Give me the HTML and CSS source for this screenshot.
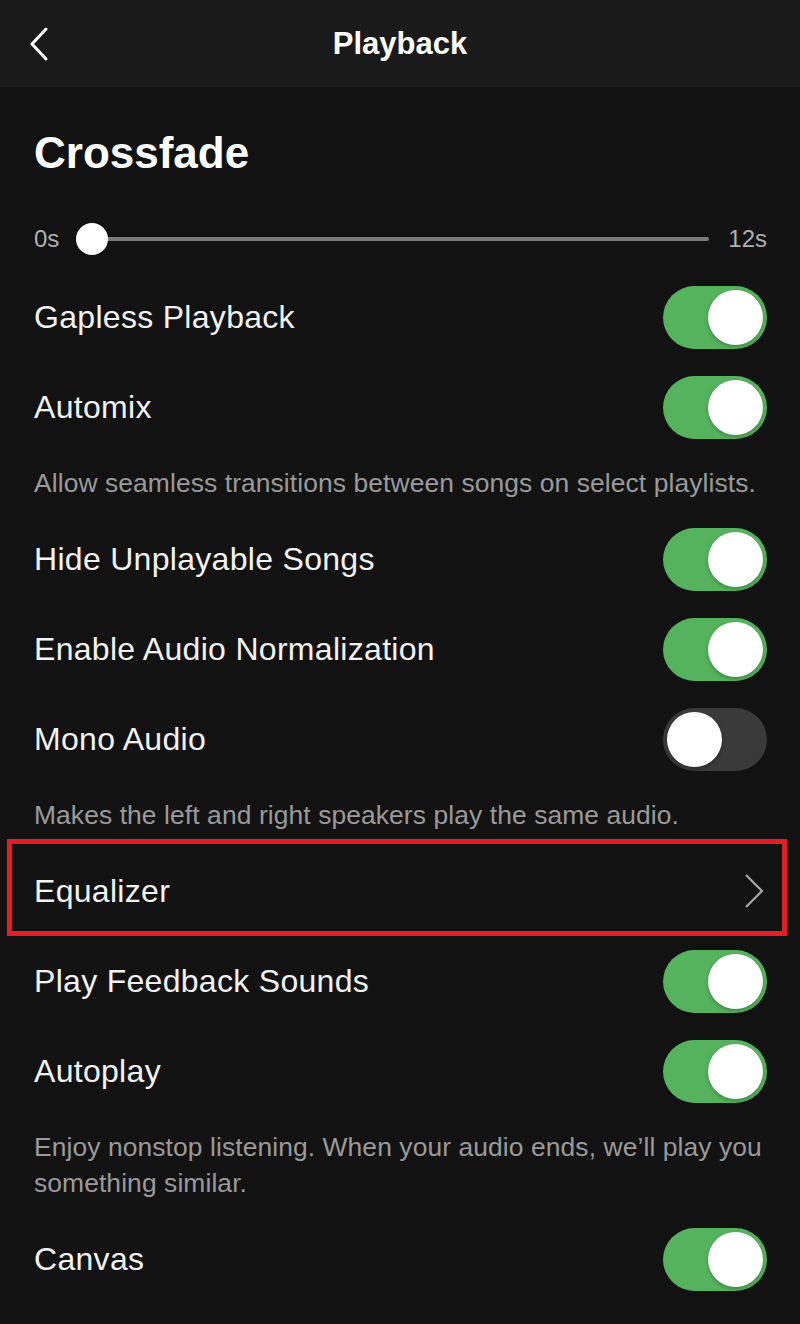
FILE: index.html
```html
<!DOCTYPE html>
<html lang="en">
<head>
  <meta charset="UTF-8">
  <title>Playback</title>
  <link rel="stylesheet" href="styles.css">
</head>
<body>
  <div class="topbar">
    <div class="back">
      <svg width="20" height="34" viewBox="0 0 20 34">
        <polyline points="17,2 3,17 17,32" fill="none" stroke="#fff" stroke-width="3" stroke-linecap="round" stroke-linejoin="round"/>
      </svg>
    </div>
    <h2>Playback</h2>
    <div></div>
  </div>

  <div class="settings">
    <h1>Crossfade</h1>

    <div class="slider">
      <span class="slider-label">0s</span>
      <div class="track"><div class="thumb"></div></div>
      <span class="slider-label">12s</span>
    </div>

    <div class="row">
      <span>Gapless Playback</span>
      <div class="switch on"><div class="knob"></div></div>
    </div>
    <div class="row">
      <span>Automix</span>
      <div class="switch on"><div class="knob"></div></div>
    </div>
    <p class="hint">Allow seamless transitions between songs on select playlists.</p>

    <div class="row">
      <span>Hide Unplayable Songs</span>
      <div class="switch on"><div class="knob"></div></div>
    </div>
    <div class="row">
      <span>Enable Audio Normalization</span>
      <div class="switch on"><div class="knob"></div></div>
    </div>
    <div class="row">
      <span>Mono Audio</span>
      <div class="switch"><div class="knob"></div></div>
    </div>
    <p class="hint">Makes the left and right speakers play the same audio.</p>

    <div class="row marked">
      <span>Equalizer</span>
      <svg class="chevron" width="20" height="34" viewBox="0 0 20 34">
        <polyline points="2,1 18,17 2,33" fill="none" stroke="#a8a8a8" stroke-width="2.2"/>
      </svg>
    </div>

    <div class="row">
      <span>Play Feedback Sounds</span>
      <div class="switch on"><div class="knob"></div></div>
    </div>
    <div class="row">
      <span>Autoplay</span>
      <div class="switch on"><div class="knob"></div></div>
    </div>
    <p class="hint">Enjoy nonstop listening. When your audio ends, we’ll play you something similar.</p>

    <div class="row">
      <span>Canvas</span>
      <div class="switch on"><div class="knob"></div></div>
    </div>
  </div>
</body>
</html>
```

FILE: styles.css
```css
* {
  margin: 0;
  padding: 0;
  box-sizing: border-box;
  font-family: 'Liberation Sans', Arial, sans-serif;
}

html, body {
  width: 100%;
  height: 100%;
  background: #121212;
  color: #f2f2f2;
  overflow: hidden;
}

.topbar {
  display: grid;
  grid-template-columns: 1fr auto 1fr;
  align-items: center;
  height: 87px;
  background: #1a1a1a;
}

.back {
  display: flex;
  align-items: center;
  padding-left: 29px;
}

.topbar h2 {
  font-size: 31px;
  font-weight: bold;
  color: #fff;
}

.settings {
  padding: 0 33px 0 34px;
}

h1 {
  font-size: 44px;
  font-weight: bold;
  color: #fff;
  line-height: 52px;
  padding-top: 40px;
}

.slider {
  display: flex;
  align-items: center;
  height: 66px;
  margin-top: 27px;
}

.slider-label {
  font-size: 24px;
  color: #b0b0b0;
}

.track {
  flex: 1;
  position: relative;
  height: 4px;
  border-radius: 2px;
  background: #7a7a7a;
  margin: 0 19px 0 33px;
}

.thumb {
  position: absolute;
  left: -16px;
  top: -14px;
  width: 32px;
  height: 32px;
  border-radius: 50%;
  background: #fff;
}

.row {
  display: flex;
  justify-content: space-between;
  align-items: center;
  height: 90px;
  font-size: 32px;
  letter-spacing: 0.3px;
}

.row.marked {
  position: relative;
}

.row.marked::after {
  content: "";
  position: absolute;
  top: -7px;
  bottom: 0;
  left: -27px;
  right: -20px;
  border: 5px solid #e41e26;
}

.chevron {
  margin-right: 3px;
}

.hint {
  font-size: 26.4px;
  letter-spacing: 0.1px;
  line-height: 36px;
  color: #9a9a9a;
  padding: 13px 0;
}

.switch {
  width: 104px;
  height: 63px;
  border-radius: 32px;
  background: #3a3a3a;
  padding: 4px;
  display: flex;
  align-items: center;
  justify-content: flex-start;
}

.switch.on {
  background: #56b35d;
  justify-content: flex-end;
}

.knob {
  width: 55px;
  height: 55px;
  border-radius: 50%;
  background: #fff;
  box-shadow: 0 2px 4px rgba(0, 0, 0, 0.25);
}
```
